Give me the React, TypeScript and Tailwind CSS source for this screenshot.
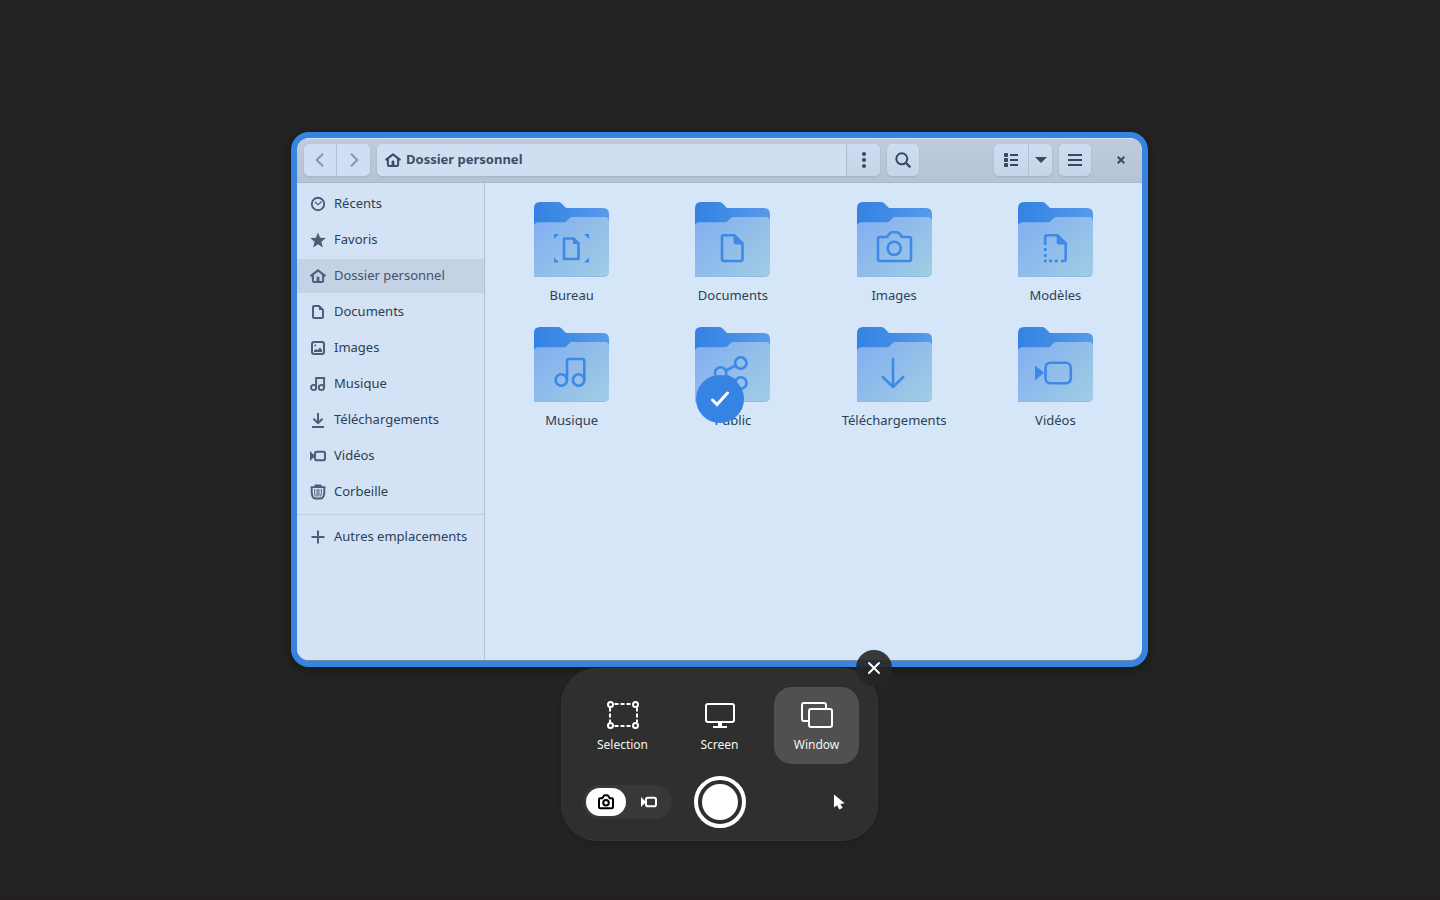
import { useId, useState } from "react";
import type { ReactNode } from "react";

type IconProps = { className?: string };

// ─── Symbolic icons (16px grid) ─────────────────────────────────────────────

function Symbolic({ children, className = "size-4" }: { children: ReactNode; className?: string }) {
  return (
    <svg
      viewBox="0 0 16 16"
      fill="none"
      stroke="currentColor"
      strokeWidth={2}
      className={`shrink-0 ${className}`}
      aria-hidden="true"
    >
      {children}
    </svg>
  );
}

const RecentIcon = () => (
  <Symbolic>
    <circle cx="8" cy="8" r="6.2" strokeWidth={1.9} />
    <path d="M5 6 8 8.7 11.7 5.5" strokeWidth={1.1} />
  </Symbolic>
);

const StarIcon = () => (
  <Symbolic>
    <path
      fill="currentColor"
      stroke="none"
      d="M8 .4 10.1 5.8 15.8 6.1 11.4 9.8 12.9 15.4 8 12.3 3.1 15.4 4.6 9.8 .2 6.1 5.9 5.8z"
    />
  </Symbolic>
);

const HomeIcon = ({ className }: IconProps) => (
  <Symbolic className={className}>
    <path d="M1.200 7.600 8 2.400l6.800 5.200" strokeLinecap="round" strokeLinejoin="round" />
    <path d="M2.900 7v5.600q0 1.500 1.500 1.500h7.200q1.500 0 1.500-1.500V7" />
    <path d="M6.600 14V9.800q0-1.300 1.400-1.300t1.400 1.300V14z" fill="currentColor" stroke="none" />
  </Symbolic>
);

const DocumentIcon = () => (
  <Symbolic>
    <path d="M4 2h5l4 4v7q0 1-1 1H4q-1 0-1-1V3q0-1 1-1z" strokeLinejoin="round" />
    <path d="M9 2v4h4z" fill="currentColor" stroke="none" />
  </Symbolic>
);

const ImageIcon = () => (
  <Symbolic>
    <rect x="2" y="2" width="12" height="12" rx="2" />
    <path d="M4 12V10.500L6 9l1.500 1.200L10 7.500l2 2.500v2z" fill="currentColor" stroke="none" />
    <circle cx="5.300" cy="5.500" r="1" fill="currentColor" stroke="none" />
  </Symbolic>
);

const MusicIcon = () => (
  <Symbolic>
    <circle cx="3.600" cy="11.500" r="2.600" strokeWidth={1.900} />
    <circle cx="11.400" cy="11.500" r="2.600" strokeWidth={1.900} />
    <path d="M6.100 11.500V2h8v9.500" strokeWidth={1.900} />
  </Symbolic>
);

const DownloadIcon = () => (
  <Symbolic>
    <path d="M8 1v10M3.500 6.800 8 11.200l4.500-4.400M2 15h12" />
  </Symbolic>
);

const VideoIcon = ({ className }: IconProps) => (
  <Symbolic className={className}>
    <path d="M0 3v10l5-5z" fill="currentColor" stroke="none" />
    <rect x="5" y="3.800" width="10" height="8.400" rx="1.800" />
  </Symbolic>
);

const TrashIcon = () => (
  <Symbolic>
    <path d="M4.500 1.300h7M.6 3.200h14.800" strokeWidth={1.700} />
    <path d="M1.700 4q-.3 5 .5 7.500.8 3 3.300 3h5q2.500 0 3.300-3 .8-2.500.5-7.500" strokeWidth={1.900} />
    <path d="M4.800 5q-.9 3.500.7 7.500M11.200 5q.9 3.500-.7 7.500M7.100 5v7.500M8.900 5v7.500" strokeWidth={1} />
  </Symbolic>
);

const PlusIcon = () => (
  <Symbolic>
    <path d="M8 1.500v13M1.500 8h13" />
  </Symbolic>
);

const CameraIcon = () => (
  <Symbolic>
    <path
      d="M1 13V5.500q0-1.300 1.300-1.300h1.900L5.700 2Q6.100 1.300 7 1.300h2q.9 0 1.300.7l1.500 2.200h1.900q1.300 0 1.300 1.300V13q0 1.300-1.300 1.300H2.300Q1 14.300 1 13z"
      strokeWidth={2}
    />
    <circle cx="8" cy="8.800" r="2.800" strokeWidth={2} />
  </Symbolic>
);

// ─── Folder icons (75px grid) ───────────────────────────────────────────────

function Folder({ children }: { children: ReactNode }) {
  const id = useId();
  return (
    <svg viewBox="0 0 75 75" className="size-[75px]" fill="none" aria-hidden="true">
      <defs>
        <linearGradient id={`${id}-back`} x1="0" y1="0" x2="75" y2="0" gradientUnits="userSpaceOnUse">
          <stop offset="0" stopColor="#3382e3" />
          <stop offset=".45" stopColor="#428ce6" />
          <stop offset="1" stopColor="#599ae9" />
        </linearGradient>
        <linearGradient id={`${id}-front`} x1="12" y1="18" x2="68" y2="76" gradientUnits="userSpaceOnUse">
          <stop offset="0" stopColor="#84b1ef" />
          <stop offset="1" stopColor="#a0cce4" />
        </linearGradient>
      </defs>
      <path d="M0 36V6q0-6 6-6h18q2 0 3.300 1.300L32 6h37q6 0 6 6v24z" fill={`url(#${id}-back)`} />
      <path
        d="M0 75V25q0-4.500 4.500-4.500H30q1.500 0 2.700-1.200l3.100-3.100Q37 15 39 15h31q5 0 5 5v49q0 6-6 6z"
        fill="#8fbaeb"
      />
      <path
        d="M0 74V25q0-4.500 4.500-4.500H30q1.500 0 2.700-1.200l3.100-3.100Q37 15 39 15h31q5 0 5 5v48q0 6-6 6z"
        fill={`url(#${id}-front)`}
      />
      <g stroke="#3c89e6" strokeWidth={2.6} strokeLinejoin="round">
        {children}
      </g>
    </svg>
  );
}

const folders = [
  {
    label: "Bureau",
    art: (
      <>
        <path d="M30 36.500h9.500l5 5V57h-14.500z" />
        <path
          d="M39 36v6h6zM20 32h5l-5 5zM55 32h-5l5 5zM20 60.500h5l-5-5zM55 60.500h-5l5-5z"
          fill="#3c89e6"
          stroke="none"
        />
      </>
    ),
  },
  {
    label: "Documents",
    art: (
      <>
        <path d="M29 33.300h10.500l8 8V57q0 2-2 2H29q-2 0-2-2V35.300q0-2 2-2z" />
        <path d="M38.500 33v7q0 2.500 2.500 2.500h7z" fill="#3c89e6" stroke="none" />
      </>
    ),
  },
  {
    label: "Images",
    art: (
      <>
        <path d="M21 57V37q0-2 2-2h6q1 0 1.700-.9l1.700-2.300q1.100-1.500 3-1.500h4.200q1.900 0 3 1.500l1.700 2.300q.7.900 1.700.9h6q2 0 2 2v20q0 2-2 2H23q-2 0-2-2z" />
        <circle cx="37.200" cy="46.300" r="6.600" />
      </>
    ),
  },
  {
    label: "Modèles",
    art: (
      <>
        <path d="M27.200 43v-7.700q0-2 2-2h10.500l8 8V57q0 2-2 2H43" />
        <path d="M38.700 33v7q0 2.500 2.500 2.500h7z" fill="#3c89e6" stroke="none" />
        <path
          d="M25.900 46h2.700v3h-2.700zM25.900 52h2.700v3h-2.700zM25.900 57.600h2.700v2.700h-2.700zM31 57.600h3v2.700h-3zM36.800 57.600h3v2.700h-3z"
          fill="#3c89e6"
          stroke="none"
        />
      </>
    ),
  },
  {
    label: "Musique",
    art: (
      <>
        <circle cx="27.300" cy="53" r="5.700" />
        <circle cx="44.600" cy="53" r="5.700" />
        <path d="M33 53V34q0-2 2-2h13.300q2 0 2 2v19" />
      </>
    ),
  },
  {
    label: "Public",
    art: (
      <>
        <circle cx="45.800" cy="36" r="5.700" />
        <circle cx="25.600" cy="46" r="5.700" />
        <circle cx="45.800" cy="56" r="5.700" />
        <path d="m31 43.500 9.700-5M31 48.500l9.700 5" />
      </>
    ),
  },
  {
    label: "Téléchargements",
    art: <path d="M36 32v28M25.800 50 36 60l10.200-10" strokeLinecap="round" />,
  },
  {
    label: "Vidéos",
    art: (
      <>
        <rect x="27.500" y="35.700" width="25.300" height="20.600" rx="5" />
        <path d="M17 38.500 26 45.700 17 53.500z" fill="#3c89e6" stroke="none" />
      </>
    ),
  },
];

const places = [
  { label: "Récents", icon: <RecentIcon /> },
  { label: "Favoris", icon: <StarIcon /> },
  { label: "Dossier personnel", icon: <HomeIcon /> },
  { label: "Documents", icon: <DocumentIcon /> },
  { label: "Images", icon: <ImageIcon /> },
  { label: "Musique", icon: <MusicIcon /> },
  { label: "Téléchargements", icon: <DownloadIcon /> },
  { label: "Vidéos", icon: <VideoIcon /> },
  { label: "Corbeille", icon: <TrashIcon /> },
];

const headerButton =
  "flex h-8 items-center justify-center bg-linear-to-b from-[#cedef2] to-[#c5d4e6] text-[#354a61]";
const raised = "rounded-[5px] shadow-[0_0_1px_#a3b2c4,0_1px_2px_#a3b2c4]";

function HeaderBar() {
  return (
    <header className="flex items-center border-t border-b border-t-[#d6e4f5] border-b-[#a9b8ca] bg-linear-to-b from-[#bfccdd] to-[#b5c3d4] pt-[5px] pr-[5px] pb-[6px] pl-[7px]">
      <div className={`flex divide-x divide-[#b1c0d2] overflow-hidden ${raised}`}>
        <button aria-label="Précédent" className="flex h-8 w-[33px] items-center justify-center bg-[#cfdff3] text-[#8496ac]">
          <Symbolic>
            <path d="M11 1.800 4.800 8l6.200 6.200" />
          </Symbolic>
        </button>
        <button aria-label="Suivant" className="flex h-8 w-[33px] items-center justify-center bg-[#cfdff3] text-[#8496ac]">
          <Symbolic>
            <path d="M5 1.800 11.200 8 5 14.200" />
          </Symbolic>
        </button>
      </div>

      <div className={`ml-[7px] flex min-w-0 flex-1 overflow-hidden ${raised}`}>
        <a
          href="#home"
          className="flex h-8 min-w-0 flex-1 items-center gap-[5px] bg-[#cfdef1] pl-2 text-[13px] font-bold text-[#3a4f67]"
        >
          <HomeIcon />
          <span className="truncate">Dossier personnel</span>
        </a>
        <button aria-label="Menu du dossier" className={`${headerButton} w-[34px] border-l border-[#a9b8ca]`}>
          <Symbolic>
            <g fill="currentColor" stroke="none">
              <circle cx="8" cy="2" r="2" />
              <circle cx="8" cy="8" r="2" />
              <circle cx="8" cy="14" r="2" />
            </g>
          </Symbolic>
        </button>
      </div>

      <button aria-label="Rechercher" className={`${headerButton} ${raised} mr-[75px] ml-[7px] w-8`}>
        <Symbolic>
          <circle cx="6.800" cy="6.800" r="5.500" />
          <path d="m11 11 4.300 4.300" strokeWidth={2.300} />
        </Symbolic>
      </button>

      <div className={`flex overflow-hidden ${raised}`}>
        <button aria-label="Affichage en liste" className={`${headerButton} w-[34px]`}>
          <Symbolic>
            <path
              d="M1.500 1.500h3v3h-3zM1.500 6.500h3v3h-3zM1.500 11.500h3v3h-3z"
              fill="currentColor"
              strokeWidth={1}
              strokeLinejoin="round"
            />
            <path d="M7 3h8M7 8h8M7 13h8" />
          </Symbolic>
        </button>
        <button aria-label="Options d’affichage" className={`${headerButton} w-6 border-l border-[#b1c0d2]`}>
          <svg viewBox="0 0 12 6" className="h-[6px] w-3" fill="currentColor" aria-hidden="true">
            <path d="M0 0h12L6 6z" />
          </svg>
        </button>
      </div>

      <button aria-label="Menu principal" className={`${headerButton} ${raised} ml-[7px] w-8`}>
        <Symbolic>
          <path d="M1 3h14M1 8h14M1 13h14" />
        </Symbolic>
      </button>

      <button aria-label="Fermer la fenêtre" className="ml-[13px] flex h-8 w-[33px] items-center justify-center text-[#354a61]">
        <svg viewBox="0 0 8 8" className="size-2" stroke="currentColor" strokeWidth={2} aria-hidden="true">
          <path d="m.7.7 6.600 6.600M7.300.7.7 7.300" />
        </svg>
      </button>
    </header>
  );
}

function Sidebar() {
  const row = "flex h-[34px] items-center gap-2 pl-[13px] whitespace-nowrap text-[#4a5e75]";

  return (
    <nav className="w-[188px] shrink-0 border-r border-[#b2c1d3] bg-[#d3e2f5] pt-1 text-[13px]">
      <ul className="flex flex-col gap-[2px]">
        {places.map((place) => (
          <li key={place.label}>
            <a
              href={`#${place.label}`}
              className={`${row} ${place.label === "Dossier personnel" ? "bg-[#c4d2e5]" : ""}`}
            >
              {place.icon}
              <span className={place.label === "Dossier personnel" ? "text-[#40536a]" : "text-[#2c3f56]"}>
                {place.label}
              </span>
            </a>
          </li>
        ))}
      </ul>
      <hr className="my-[5px] border-[#c0cfe2]" />
      <a href="#other" className={row}>
        <PlusIcon />
        <span className="text-[#2c3f56]">Autres emplacements</span>
      </a>
    </nav>
  );
}

function FilesWindow() {
  return (
    <section
      aria-label="Dossier personnel"
      className="relative w-full max-w-[857px] rounded-[18px] bg-[#3584e4] p-[6px] shadow-[0_2px_8px_2px_rgba(0,0,0,0.25)]"
    >
      <div className="flex min-h-[523px] flex-col overflow-hidden rounded-[12px] border-b border-[#73879f] bg-[#d5e6f8]">
        <HeaderBar />
        <div className="flex flex-1">
          <Sidebar />
          <main className="flex-1 px-[6px] pt-[19px]">
            <ul className="grid grid-cols-4 gap-y-[22px]">
              {folders.map((folder) => (
                <li key={folder.label} className="flex justify-center">
                  <button className="flex flex-col items-center gap-2 text-[13px] leading-5 text-[#2c3f56]">
                    <Folder>{folder.art}</Folder>
                    {folder.label}
                  </button>
                </li>
              ))}
            </ul>
          </main>
        </div>
      </div>

      {/* Selected window mark */}
      <div className="pointer-events-none absolute inset-0 flex items-center justify-center pb-px">
        <span className="flex size-12 items-center justify-center rounded-full bg-[#3584e4]">
          <svg viewBox="0 0 20 16" className="h-4 w-5" fill="none" stroke="#fff" strokeWidth={3} strokeLinecap="round" aria-hidden="true">
            <path d="m2.500 9 4.500 4.500L17.500 2" />
          </svg>
        </span>
      </div>
    </section>
  );
}

// ─── Screenshot panel ───────────────────────────────────────────────────────

const modes = [
  {
    label: "Selection",
    icon: (
      <>
        <path d="M6.500 5h19M6.500 27h19" strokeDasharray="4 2" strokeDashoffset="-1" />
        <path d="M3 8.500v15M30 8.500v15" strokeDasharray="4 2" />
        <circle cx="3.500" cy="5.500" r="2.500" />
        <circle cx="28.500" cy="5.500" r="2.500" />
        <circle cx="3.500" cy="26.500" r="2.500" />
        <circle cx="28.500" cy="26.500" r="2.500" />
      </>
    ),
  },
  {
    label: "Screen",
    icon: (
      <>
        <rect x="2" y="5" width="28" height="18" rx="2" />
        <path d="M16 23v5" strokeWidth={4} />
        <path d="M9 28h14" strokeLinecap="butt" />
      </>
    ),
  },
  {
    label: "Window",
    icon: (
      <>
        <path d="M7 22H3q-2 0-2-2V6q0-2 2-2h20q2 0 2 2v4" />
        <rect x="8" y="10" width="23" height="18" rx="2" />
      </>
    ),
  },
];

function ScreenshotPanel() {
  const [mode, setMode] = useState("Window");
  const [kind, setKind] = useState("photo");

  return (
    <section
      aria-label="Screenshot"
      className="relative mt-px rounded-[36px] border border-[#353535] bg-[#2f2f2f] px-[18px] pt-[18px] pb-3 shadow-[0_2px_6px_rgba(0,0,0,0.15)]"
    >
      <div className="flex gap-3">
        {modes.map((m) => (
          <button
            key={m.label}
            aria-pressed={mode === m.label}
            onClick={() => setMode(m.label)}
            className={`flex h-[77px] w-[85px] flex-col items-center rounded-[18px] pt-3 text-xs text-[#f2f2f2] ${
              mode === m.label ? "bg-[#505050]" : ""
            }`}
          >
            <svg viewBox="0 0 32 32" className="mb-[6px] size-8" fill="none" stroke="#fff" strokeWidth={2} aria-hidden="true">
              {m.icon}
            </svg>
            {m.label}
          </button>
        ))}
      </div>

      <div className="mt-3 grid grid-cols-[1fr_auto_1fr] items-center">
        <div className="ml-[3px] flex gap-[3px] justify-self-start rounded-full bg-[#383838] p-[3px]">
          {["photo", "video"].map((k) => (
            <label
              key={k}
              className={`flex h-7 w-10 items-center justify-center rounded-full ${
                kind === k ? "bg-white text-black" : "text-white"
              }`}
            >
              <input
                type="radio"
                name="kind"
                aria-label={k}
                checked={kind === k}
                onChange={() => setKind(k)}
                className="sr-only"
              />
              {k === "photo" ? <CameraIcon /> : <VideoIcon />}
            </label>
          ))}
        </div>
        <button aria-label="Capture" className="size-[52px] rounded-full border-4 border-white p-1">
          <span className="block size-full rounded-full bg-white" />
        </button>
        <button aria-label="Show pointer" className="flex h-7 w-10 items-center justify-center justify-self-end">
          <svg viewBox="0 0 16 16" className="size-4" fill="#fff" aria-hidden="true">
            <path d="M3 .6V13.500l3-2.300 2.400 4.200 3.200-1.600-2.200-3.800 4.200-.8z" />
          </svg>
        </button>
      </div>

      <button
        aria-label="Close"
        className="absolute -top-[19px] -right-[15px] flex size-9 items-center justify-center rounded-full bg-[#262626]/90 text-white"
      >
        <svg viewBox="0 0 16 16" className="size-4" stroke="currentColor" strokeWidth={2} strokeLinecap="round" aria-hidden="true">
          <path d="m3 3 10 10M13 3 3 13" />
        </svg>
      </button>
    </section>
  );
}

export default function App() {
  return (
    <div className="flex min-h-screen flex-col items-center border-b-4 border-[#231e20] bg-[#232323] pt-[132px] pr-px font-['Noto_Sans',sans-serif]">
      <FilesWindow />
      <ScreenshotPanel />
    </div>
  );
}
